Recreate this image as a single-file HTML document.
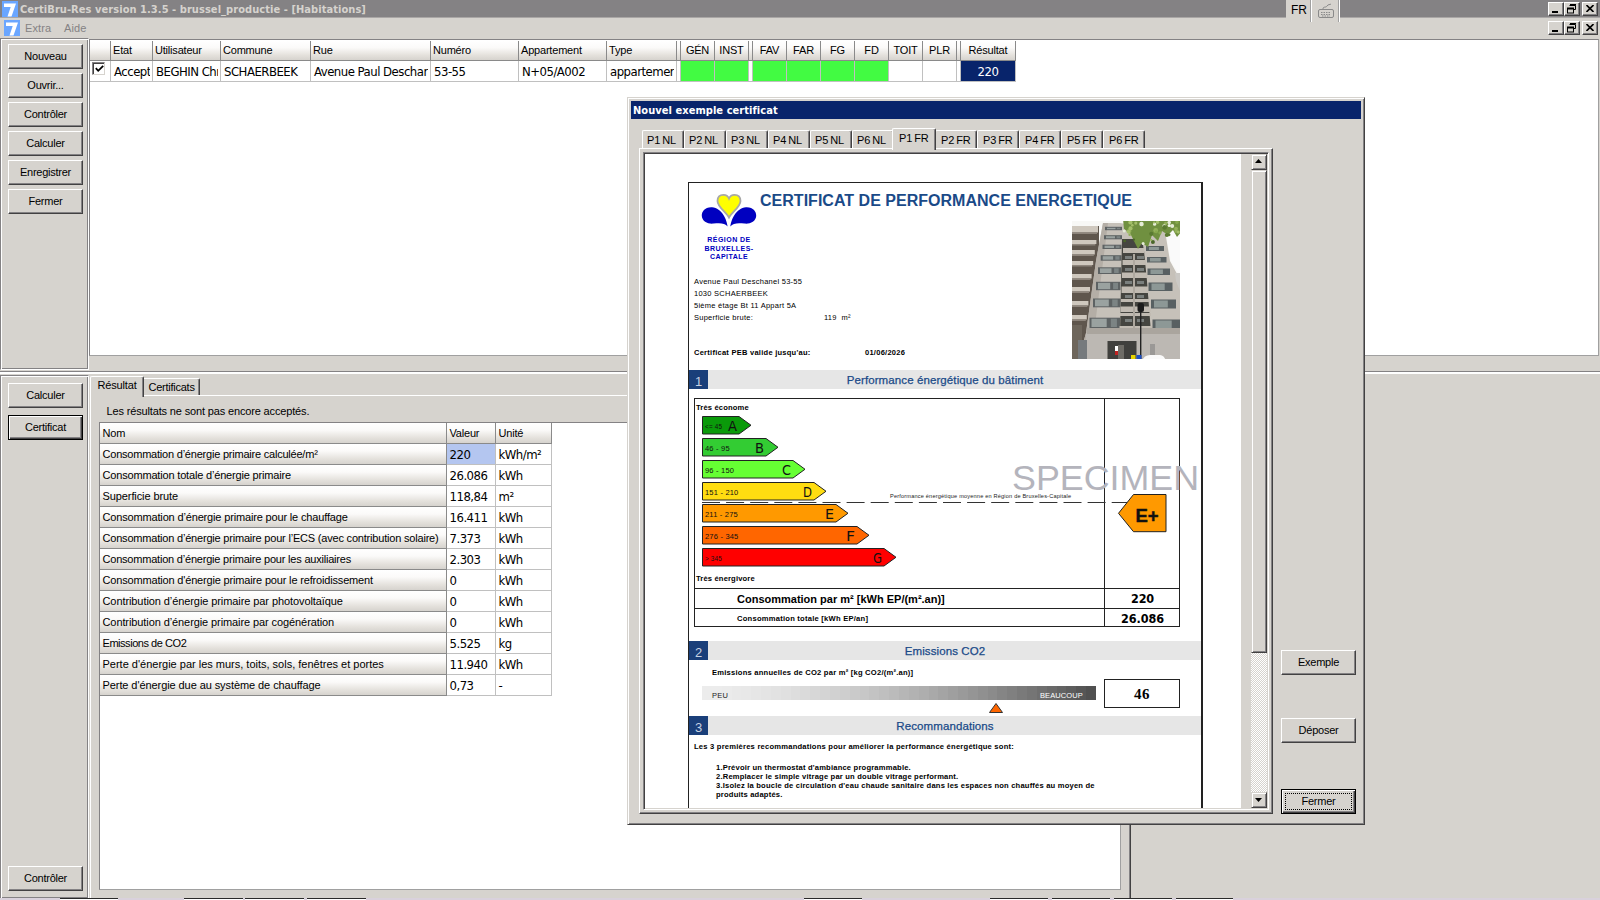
<!DOCTYPE html>
<html lang="fr">
<head>
<meta charset="utf-8">
<title>CertiBru-Res version 1.3.5 - brussel_productie - [Habitations]</title>
<style>
html,body{margin:0;padding:0}
body{width:1600px;height:900px;background:#d6d3ce;position:relative;overflow:hidden;
 font-family:"Liberation Sans",sans-serif;font-size:11px;color:#000;line-height:1}
*{box-sizing:border-box}
.a{position:absolute;white-space:nowrap}
.th{font-family:"Liberation Sans",sans-serif;font-size:11px;letter-spacing:-0.2px}
.tv{font-family:"DejaVu Sans Condensed","DejaVu Sans","Liberation Sans",sans-serif;font-size:13px;letter-spacing:-0.5px}
.btn{position:absolute;width:75px;height:25px;background:#d6d3ce;border:1px solid;border-color:#fff #424142 #424142 #fff;
 box-shadow:inset -1px -1px 0 #848284;text-align:center;line-height:22px;font-size:11px;white-space:nowrap;letter-spacing:-0.25px}
.btn.def{border:1px solid #000;box-shadow:inset 1px 1px 0 #fff,inset -1px -1px 0 #424142,inset -2px -2px 0 #848284}
.hd{position:absolute;top:41px;height:20px;background:linear-gradient(#fff 0%,#fbfaf9 35%,#e4e1dc 75%,#d6d3ce 100%);
 border-right:1px solid #8a8a8a;border-bottom:1px solid #8a8a8a;padding:4px 0 0 2px;white-space:nowrap;overflow:hidden}
.hd.c{padding-left:0;text-align:center}
.cl{position:absolute;top:61px;height:21px;background:#fff;border-right:1px solid #c0c0c0;border-bottom:1px solid #c0c0c0;
 padding:4px 0 0 3px;white-space:nowrap;overflow:hidden}
.cl::after{content:'';position:absolute;right:0;top:0;width:2px;height:20px;background:inherit}
.g{background:#42fb42}
.sunk{position:absolute;border:1px solid;border-color:#848284 #fff #fff #848284;box-shadow:inset 1px 1px 0 #fff,inset -1px -1px 0 #848284}
.rais{position:absolute;border:1px solid;border-color:#fff #848284 #848284 #fff}
.wb{position:absolute;width:16px;height:14px;background:#d6d3ce;border:1px solid;border-color:#fff #424142 #424142 #fff;box-shadow:inset -1px -1px 0 #848284}
</style>
</head>
<body>
<!-- ===== main title bar ===== -->
<div class="a" style="left:0;top:0;width:1600px;height:18px;background:#848284;border-bottom:1px solid #aaa7a6"></div>
<svg class="a" style="left:2px;top:1px" width="16" height="16" viewBox="0 0 16 16"><rect width="16" height="16" fill="#6aa6ff"/><path d="M2 2.5h12l-4.5 13H5.5l3.2-9.5H2z" fill="#fff"/></svg>
<div class="a" style="left:20px;top:3px;color:#d6d3ce;font-family:'DejaVu Sans Condensed','DejaVu Sans','Liberation Sans',sans-serif;font-weight:bold;font-size:11px;letter-spacing:0.06px;line-height:13px">CertiBru-Res version 1.3.5 - brussel_productie - [Habitations]</div>
<!-- language bar -->
<div class="a" style="left:1286px;top:0;width:54px;height:22px;background:#d6d3ce"></div>
<div class="a" style="left:1311px;top:0;width:1px;height:22px;background:#fff"></div>
<div class="a" style="left:1310px;top:0;width:1px;height:22px;background:#a0a0a0"></div>
<div class="a" style="left:1339px;top:0;width:1px;height:22px;background:#fff"></div>
<div class="a" style="left:1338px;top:0;width:1px;height:22px;background:#a0a0a0"></div>
<div class="a" style="left:1291px;top:4px;font-size:12px;line-height:13px;font-family:'Liberation Sans',sans-serif">FR</div>
<svg class="a" style="left:1317px;top:3px" width="18" height="16" viewBox="0 0 18 16" fill="none" stroke="#8a8a8a" stroke-width="1"><rect x="1.5" y="6.5" width="15" height="8" rx="1.5"/><path d="M4 9.5h10M4 11.5h10M5 13h8" stroke-dasharray="1.5 1"/><path d="M6 6c0-3 3-1 4-3s3-1 4-2"/></svg>
<!-- window buttons row 1 -->
<div class="wb" style="left:1548px;top:2px"></div><div class="a" style="left:1552px;top:11px;width:6px;height:2px;background:#000"></div>
<div class="wb" style="left:1564px;top:2px"></div>
<svg class="a" style="left:1567px;top:4px" width="10" height="10" viewBox="0 0 10 10" fill="none" stroke="#000"><path d="M3 1.0h6M2.5 1.5h6v4h-1.5M2.5 2.5"/><path d="M3 0.5h6" stroke-width="1"/><rect x="0.5" y="4.5" width="6" height="4.5" fill="#d6d3ce"/><path d="M0 4.5h7" stroke-width="2"/></svg>
<div class="wb" style="left:1582px;top:2px"></div>
<svg class="a" style="left:1586px;top:5px" width="8" height="7" viewBox="0 0 8 7" stroke="#000" stroke-width="1.6"><path d="M0.5 0l7 7M7.5 0l-7 7"/></svg>
<!-- ===== menu bar ===== -->
<svg class="a" style="left:4px;top:20px" width="16" height="16" viewBox="0 0 16 16"><rect width="16" height="16" fill="#6aa6ff"/><path d="M2 2.5h12l-4.5 13H5.5l3.2-9.5H2z" fill="#fff"/></svg>
<div class="a th" style="left:25px;top:23px;color:#848284;font-size:11px;letter-spacing:0.1px">Extra</div>
<div class="a th" style="left:64px;top:23px;color:#848284;font-size:11px;letter-spacing:0.1px">Aide</div>
<!-- window buttons row 2 -->
<div class="wb" style="left:1548px;top:21px"></div><div class="a" style="left:1552px;top:30px;width:6px;height:2px;background:#000"></div>
<div class="wb" style="left:1564px;top:21px"></div>
<svg class="a" style="left:1567px;top:23px" width="10" height="10" viewBox="0 0 10 10" fill="none" stroke="#000"><path d="M2.5 1.5h6v4h-1.5"/><path d="M3 0.5h6" stroke-width="1"/><rect x="0.5" y="4.5" width="6" height="4.5" fill="#d6d3ce"/><path d="M0 4.5h7" stroke-width="2"/></svg>
<div class="wb" style="left:1582px;top:21px"></div>
<svg class="a" style="left:1586px;top:24px" width="8" height="7" viewBox="0 0 8 7" stroke="#000" stroke-width="1.6"><path d="M0.5 0l7 7M7.5 0l-7 7"/></svg>
<!-- ===== left top panel ===== -->
<div class="sunk" style="left:0;top:38px;width:89px;height:332px"></div>
<div class="btn" style="left:8px;top:44px">Nouveau</div>
<div class="btn" style="left:8px;top:73px">Ouvrir...</div>
<div class="btn" style="left:8px;top:102px">Contrôler</div>
<div class="btn" style="left:8px;top:131px">Calculer</div>
<div class="btn" style="left:8px;top:160px">Enregistrer</div>
<div class="btn" style="left:8px;top:189px">Fermer</div>
<!-- ===== top grid ===== -->
<div class="a" style="left:89px;top:39px;width:1510px;height:317px;background:#fff;border:1px solid;border-color:#848284 #a0a0a0 #a0a0a0 #848284"></div>
<div class="hd" style="left:90px;width:21px"></div>
<div class="hd th" style="left:111px;width:42px">Etat</div>
<div class="hd th" style="left:153px;width:68px">Utilisateur</div>
<div class="hd th" style="left:221px;width:90px">Commune</div>
<div class="hd th" style="left:311px;width:120px">Rue</div>
<div class="hd th" style="left:431px;width:88px">Numéro</div>
<div class="hd th" style="left:519px;width:88px">Appartement</div>
<div class="hd th" style="left:607px;width:70px">Type</div>
<div class="hd" style="left:677px;width:4px"></div>
<div class="hd th c" style="left:681px;width:34px">GÉN</div>
<div class="hd th c" style="left:715px;width:34px">INST</div>
<div class="hd" style="left:749px;width:4px"></div>
<div class="hd th c" style="left:753px;width:34px">FAV</div>
<div class="hd th c" style="left:787px;width:34px">FAR</div>
<div class="hd th c" style="left:821px;width:34px">FG</div>
<div class="hd th c" style="left:855px;width:34px">FD</div>
<div class="hd th c" style="left:889px;width:34px">TOIT</div>
<div class="hd th c" style="left:923px;width:34px">PLR</div>
<div class="hd" style="left:957px;width:4px"></div>
<div class="hd th c" style="left:961px;width:55px">Résultat</div>
<!-- data row -->
<div class="cl" style="left:90px;width:21px;padding:0"></div>
<div class="a" style="left:92px;top:62px;width:13px;height:13px;background:#fff;border:1px solid;border-color:#848284 #d6d3ce #d6d3ce #848284;box-shadow:inset 1px 1px 0 #424142"></div>
<svg class="a" style="left:95px;top:65px" width="9" height="8" viewBox="0 0 9 8" fill="none" stroke="#000" stroke-width="1.8"><path d="M0.8 3.2l2.4 2.6l5-5"/></svg>
<div class="cl tv" style="left:111px;width:42px">Accepté</div>
<div class="cl tv" style="left:153px;width:68px">BEGHIN Christian</div>
<div class="cl tv" style="left:221px;width:90px">SCHAERBEEK</div>
<div class="cl tv" style="left:311px;width:120px">Avenue Paul Deschanel</div>
<div class="cl tv" style="left:431px;width:88px">53-55</div>
<div class="cl tv" style="left:519px;width:88px">N+05/A002</div>
<div class="cl tv" style="left:607px;width:70px">appartement</div>
<div class="cl" style="left:677px;width:4px;padding:0"></div>
<div class="cl g" style="left:681px;width:34px"></div>
<div class="cl g" style="left:715px;width:34px"></div>
<div class="cl" style="left:749px;width:4px;padding:0"></div>
<div class="cl g" style="left:753px;width:34px"></div>
<div class="cl g" style="left:787px;width:34px"></div>
<div class="cl g" style="left:821px;width:34px"></div>
<div class="cl g" style="left:855px;width:34px"></div>
<div class="cl" style="left:889px;width:34px"></div>
<div class="cl" style="left:923px;width:34px"></div>
<div class="cl" style="left:957px;width:4px;padding:0"></div>
<div class="cl tv" style="left:961px;width:55px;background:#08246b;color:#fff;text-align:center;padding-left:0">220</div>
<!-- ===== horizontal splitter ===== -->
<div class="a" style="left:0;top:371px;width:1600px;height:1px;background:#848284"></div>
<div class="a" style="left:0;top:372px;width:1600px;height:2px;background:#fff"></div>
<!-- ===== left bottom panel ===== -->
<div class="sunk" style="left:0;top:375px;width:89px;height:523px;border-bottom:0"></div>
<div class="btn" style="left:8px;top:383px">Calculer</div>
<div class="btn def" style="left:8px;top:415px">Certificat</div>
<div class="btn" style="left:8px;top:866px">Contrôler</div>
<!-- ===== bottom tab control ===== -->
<div class="a" style="left:90px;top:395px;width:1041px;height:510px;border:1px solid;border-color:#fff #424142 #424142 #fff;box-shadow:inset -1px -1px 0 #848284"></div>
<div class="a" style="left:90px;top:376px;width:54px;height:21px;background:#d6d3ce;border:1px solid;border-color:#fff #424142 #d6d3ce #fff;border-bottom:0;box-shadow:inset -1px 0 0 #848284;border-radius:2px 2px 0 0"></div>
<div class="a" style="left:97.5px;top:379.5px;font-size:11px;letter-spacing:-0.15px">Résultat</div>
<div class="a" style="left:144px;top:378px;width:56px;height:17px;background:#d6d3ce;border:1px solid;border-color:#fff #424142 #d6d3ce #fff;border-bottom:0;border-left:0;box-shadow:inset -1px 0 0 #848284;border-radius:0 2px 0 0"></div>
<div class="a" style="left:148.5px;top:382px;font-size:11px;letter-spacing:-0.25px">Certificats</div>
<div class="a" style="left:106.5px;top:406px;font-size:11px;letter-spacing:-0.15px">Les résultats ne sont pas encore acceptés.</div>
<div class="a" style="left:99px;top:422px;width:1022px;height:468px;background:#fff;border:1px solid;border-color:#848284 #a0a0a0 #a0a0a0 #848284"></div>
<div class="th" style="position:absolute;height:21px;background:linear-gradient(#fff 0%,#fbfaf9 35%,#e4e1dc 75%,#d6d3ce 100%);border-right:1px solid #8a8a8a;border-bottom:1px solid #8a8a8a;padding:5px 0 0 2.5px;white-space:nowrap;overflow:hidden;left:100px;top:423px;width:347px">Nom</div>
<div class="th" style="position:absolute;height:21px;background:linear-gradient(#fff 0%,#fbfaf9 35%,#e4e1dc 75%,#d6d3ce 100%);border-right:1px solid #8a8a8a;border-bottom:1px solid #8a8a8a;padding:5px 0 0 2.5px;white-space:nowrap;overflow:hidden;left:447px;top:423px;width:49px">Valeur</div>
<div class="th" style="position:absolute;height:21px;background:linear-gradient(#fff 0%,#fbfaf9 35%,#e4e1dc 75%,#d6d3ce 100%);border-right:1px solid #8a8a8a;border-bottom:1px solid #8a8a8a;padding:5px 0 0 2.5px;white-space:nowrap;overflow:hidden;left:496px;top:423px;width:56px">Unité</div>
<div class="th" style="position:absolute;height:21px;background:linear-gradient(#fff 0%,#fbfaf9 35%,#e4e1dc 75%,#d6d3ce 100%);border-right:1px solid #8a8a8a;border-bottom:1px solid #8a8a8a;padding:5px 0 0 2.5px;white-space:nowrap;overflow:hidden;left:100px;top:444px;width:347px;letter-spacing:-0.216px">Consommation d’énergie primaire calculée/m²</div>
<div class="tv" style="position:absolute;height:21px;background:#fff;border-right:1px solid #c0c0c0;border-bottom:1px solid #c0c0c0;padding:4px 0 0 2.5px;white-space:nowrap;overflow:hidden;left:447px;top:444px;width:49px;background:#b4c6f0">220</div>
<div class="tv" style="position:absolute;height:21px;background:#fff;border-right:1px solid #c0c0c0;border-bottom:1px solid #c0c0c0;padding:4px 0 0 2.5px;white-space:nowrap;overflow:hidden;left:496px;top:444px;width:56px">kWh/m²</div>
<div class="th" style="position:absolute;height:21px;background:linear-gradient(#fff 0%,#fbfaf9 35%,#e4e1dc 75%,#d6d3ce 100%);border-right:1px solid #8a8a8a;border-bottom:1px solid #8a8a8a;padding:5px 0 0 2.5px;white-space:nowrap;overflow:hidden;left:100px;top:465px;width:347px;letter-spacing:-0.174px">Consommation totale d’énergie primaire</div>
<div class="tv" style="position:absolute;height:21px;background:#fff;border-right:1px solid #c0c0c0;border-bottom:1px solid #c0c0c0;padding:4px 0 0 2.5px;white-space:nowrap;overflow:hidden;left:447px;top:465px;width:49px">26.086</div>
<div class="tv" style="position:absolute;height:21px;background:#fff;border-right:1px solid #c0c0c0;border-bottom:1px solid #c0c0c0;padding:4px 0 0 2.5px;white-space:nowrap;overflow:hidden;left:496px;top:465px;width:56px">kWh</div>
<div class="th" style="position:absolute;height:21px;background:linear-gradient(#fff 0%,#fbfaf9 35%,#e4e1dc 75%,#d6d3ce 100%);border-right:1px solid #8a8a8a;border-bottom:1px solid #8a8a8a;padding:5px 0 0 2.5px;white-space:nowrap;overflow:hidden;left:100px;top:486px;width:347px;letter-spacing:-0.094px">Superficie brute</div>
<div class="tv" style="position:absolute;height:21px;background:#fff;border-right:1px solid #c0c0c0;border-bottom:1px solid #c0c0c0;padding:4px 0 0 2.5px;white-space:nowrap;overflow:hidden;left:447px;top:486px;width:49px">118,84</div>
<div class="tv" style="position:absolute;height:21px;background:#fff;border-right:1px solid #c0c0c0;border-bottom:1px solid #c0c0c0;padding:4px 0 0 2.5px;white-space:nowrap;overflow:hidden;left:496px;top:486px;width:56px">m²</div>
<div class="th" style="position:absolute;height:21px;background:linear-gradient(#fff 0%,#fbfaf9 35%,#e4e1dc 75%,#d6d3ce 100%);border-right:1px solid #8a8a8a;border-bottom:1px solid #8a8a8a;padding:5px 0 0 2.5px;white-space:nowrap;overflow:hidden;left:100px;top:507px;width:347px;letter-spacing:-0.159px">Consommation d’énergie primaire pour le chauffage</div>
<div class="tv" style="position:absolute;height:21px;background:#fff;border-right:1px solid #c0c0c0;border-bottom:1px solid #c0c0c0;padding:4px 0 0 2.5px;white-space:nowrap;overflow:hidden;left:447px;top:507px;width:49px">16.411</div>
<div class="tv" style="position:absolute;height:21px;background:#fff;border-right:1px solid #c0c0c0;border-bottom:1px solid #c0c0c0;padding:4px 0 0 2.5px;white-space:nowrap;overflow:hidden;left:496px;top:507px;width:56px">kWh</div>
<div class="th" style="position:absolute;height:21px;background:linear-gradient(#fff 0%,#fbfaf9 35%,#e4e1dc 75%,#d6d3ce 100%);border-right:1px solid #8a8a8a;border-bottom:1px solid #8a8a8a;padding:5px 0 0 2.5px;white-space:nowrap;overflow:hidden;left:100px;top:528px;width:347px;letter-spacing:-0.196px">Consommation d’énergie primaire pour l’ECS (avec contribution solaire)</div>
<div class="tv" style="position:absolute;height:21px;background:#fff;border-right:1px solid #c0c0c0;border-bottom:1px solid #c0c0c0;padding:4px 0 0 2.5px;white-space:nowrap;overflow:hidden;left:447px;top:528px;width:49px">7.373</div>
<div class="tv" style="position:absolute;height:21px;background:#fff;border-right:1px solid #c0c0c0;border-bottom:1px solid #c0c0c0;padding:4px 0 0 2.5px;white-space:nowrap;overflow:hidden;left:496px;top:528px;width:56px">kWh</div>
<div class="th" style="position:absolute;height:21px;background:linear-gradient(#fff 0%,#fbfaf9 35%,#e4e1dc 75%,#d6d3ce 100%);border-right:1px solid #8a8a8a;border-bottom:1px solid #8a8a8a;padding:5px 0 0 2.5px;white-space:nowrap;overflow:hidden;left:100px;top:549px;width:347px;letter-spacing:-0.206px">Consommation d’énergie primaire pour les auxiliaires</div>
<div class="tv" style="position:absolute;height:21px;background:#fff;border-right:1px solid #c0c0c0;border-bottom:1px solid #c0c0c0;padding:4px 0 0 2.5px;white-space:nowrap;overflow:hidden;left:447px;top:549px;width:49px">2.303</div>
<div class="tv" style="position:absolute;height:21px;background:#fff;border-right:1px solid #c0c0c0;border-bottom:1px solid #c0c0c0;padding:4px 0 0 2.5px;white-space:nowrap;overflow:hidden;left:496px;top:549px;width:56px">kWh</div>
<div class="th" style="position:absolute;height:21px;background:linear-gradient(#fff 0%,#fbfaf9 35%,#e4e1dc 75%,#d6d3ce 100%);border-right:1px solid #8a8a8a;border-bottom:1px solid #8a8a8a;padding:5px 0 0 2.5px;white-space:nowrap;overflow:hidden;left:100px;top:570px;width:347px;letter-spacing:-0.169px">Consommation d'énergie primaire pour le refroidissement</div>
<div class="tv" style="position:absolute;height:21px;background:#fff;border-right:1px solid #c0c0c0;border-bottom:1px solid #c0c0c0;padding:4px 0 0 2.5px;white-space:nowrap;overflow:hidden;left:447px;top:570px;width:49px">0</div>
<div class="tv" style="position:absolute;height:21px;background:#fff;border-right:1px solid #c0c0c0;border-bottom:1px solid #c0c0c0;padding:4px 0 0 2.5px;white-space:nowrap;overflow:hidden;left:496px;top:570px;width:56px">kWh</div>
<div class="th" style="position:absolute;height:21px;background:linear-gradient(#fff 0%,#fbfaf9 35%,#e4e1dc 75%,#d6d3ce 100%);border-right:1px solid #8a8a8a;border-bottom:1px solid #8a8a8a;padding:5px 0 0 2.5px;white-space:nowrap;overflow:hidden;left:100px;top:591px;width:347px;letter-spacing:-0.084px">Contribution d’énergie primaire par photovoltaïque</div>
<div class="tv" style="position:absolute;height:21px;background:#fff;border-right:1px solid #c0c0c0;border-bottom:1px solid #c0c0c0;padding:4px 0 0 2.5px;white-space:nowrap;overflow:hidden;left:447px;top:591px;width:49px">0</div>
<div class="tv" style="position:absolute;height:21px;background:#fff;border-right:1px solid #c0c0c0;border-bottom:1px solid #c0c0c0;padding:4px 0 0 2.5px;white-space:nowrap;overflow:hidden;left:496px;top:591px;width:56px">kWh</div>
<div class="th" style="position:absolute;height:21px;background:linear-gradient(#fff 0%,#fbfaf9 35%,#e4e1dc 75%,#d6d3ce 100%);border-right:1px solid #8a8a8a;border-bottom:1px solid #8a8a8a;padding:5px 0 0 2.5px;white-space:nowrap;overflow:hidden;left:100px;top:612px;width:347px;letter-spacing:-0.092px">Contribution d’énergie primaire par cogénération</div>
<div class="tv" style="position:absolute;height:21px;background:#fff;border-right:1px solid #c0c0c0;border-bottom:1px solid #c0c0c0;padding:4px 0 0 2.5px;white-space:nowrap;overflow:hidden;left:447px;top:612px;width:49px">0</div>
<div class="tv" style="position:absolute;height:21px;background:#fff;border-right:1px solid #c0c0c0;border-bottom:1px solid #c0c0c0;padding:4px 0 0 2.5px;white-space:nowrap;overflow:hidden;left:496px;top:612px;width:56px">kWh</div>
<div class="th" style="position:absolute;height:21px;background:linear-gradient(#fff 0%,#fbfaf9 35%,#e4e1dc 75%,#d6d3ce 100%);border-right:1px solid #8a8a8a;border-bottom:1px solid #8a8a8a;padding:5px 0 0 2.5px;white-space:nowrap;overflow:hidden;left:100px;top:633px;width:347px;letter-spacing:-0.456px">Emissions de CO2</div>
<div class="tv" style="position:absolute;height:21px;background:#fff;border-right:1px solid #c0c0c0;border-bottom:1px solid #c0c0c0;padding:4px 0 0 2.5px;white-space:nowrap;overflow:hidden;left:447px;top:633px;width:49px">5.525</div>
<div class="tv" style="position:absolute;height:21px;background:#fff;border-right:1px solid #c0c0c0;border-bottom:1px solid #c0c0c0;padding:4px 0 0 2.5px;white-space:nowrap;overflow:hidden;left:496px;top:633px;width:56px">kg</div>
<div class="th" style="position:absolute;height:21px;background:linear-gradient(#fff 0%,#fbfaf9 35%,#e4e1dc 75%,#d6d3ce 100%);border-right:1px solid #8a8a8a;border-bottom:1px solid #8a8a8a;padding:5px 0 0 2.5px;white-space:nowrap;overflow:hidden;left:100px;top:654px;width:347px;letter-spacing:-0.003px">Perte d'énergie par les murs, toits, sols, fenêtres et portes</div>
<div class="tv" style="position:absolute;height:21px;background:#fff;border-right:1px solid #c0c0c0;border-bottom:1px solid #c0c0c0;padding:4px 0 0 2.5px;white-space:nowrap;overflow:hidden;left:447px;top:654px;width:49px">11.940</div>
<div class="tv" style="position:absolute;height:21px;background:#fff;border-right:1px solid #c0c0c0;border-bottom:1px solid #c0c0c0;padding:4px 0 0 2.5px;white-space:nowrap;overflow:hidden;left:496px;top:654px;width:56px">kWh</div>
<div class="th" style="position:absolute;height:21px;background:linear-gradient(#fff 0%,#fbfaf9 35%,#e4e1dc 75%,#d6d3ce 100%);border-right:1px solid #8a8a8a;border-bottom:1px solid #8a8a8a;padding:5px 0 0 2.5px;white-space:nowrap;overflow:hidden;left:100px;top:675px;width:347px;letter-spacing:-0.079px">Perte d'énergie due au système de chauffage</div>
<div class="tv" style="position:absolute;height:21px;background:#fff;border-right:1px solid #c0c0c0;border-bottom:1px solid #c0c0c0;padding:4px 0 0 2.5px;white-space:nowrap;overflow:hidden;left:447px;top:675px;width:49px">0,73</div>
<div class="tv" style="position:absolute;height:21px;background:#fff;border-right:1px solid #c0c0c0;border-bottom:1px solid #c0c0c0;padding:4px 0 0 2.5px;white-space:nowrap;overflow:hidden;left:496px;top:675px;width:56px">-</div>
<div class="a" style="left:0;top:898px;width:1600px;height:2px;background:#d9d1dc"></div>
<div class="a" style="left:60px;top:898px;width:58px;height:2px;background:#fff;border-top:1px solid #2a2a2a"></div>
<div class="a" style="left:184px;top:898px;width:59px;height:2px;background:#fff;border-top:1px solid #2a2a2a"></div>
<div class="a" style="left:245px;top:898px;width:59px;height:2px;background:#fff;border-top:1px solid #2a2a2a"></div>
<div class="a" style="left:307px;top:898px;width:59px;height:2px;background:#fff;border-top:1px solid #2a2a2a"></div>
<div class="a" style="left:804px;top:898px;width:58px;height:2px;background:#fff;border-top:1px solid #2a2a2a"></div>
<div class="a" style="left:990px;top:898px;width:58px;height:2px;background:#fff;border-top:1px solid #2a2a2a"></div>
<div class="a" style="left:1052px;top:898px;width:58px;height:2px;background:#fff;border-top:1px solid #2a2a2a"></div>
<div class="a" style="left:1114px;top:898px;width:58px;height:2px;background:#fff;border-top:1px solid #2a2a2a"></div>
<div class="a" style="left:1176px;top:898px;width:57px;height:2px;background:#fff;border-top:1px solid #2a2a2a"></div>
<!-- ===== dialog ===== -->
<div class="a" style="left:627px;top:97px;width:738px;height:728px;background:#d6d3ce;border:1px solid;border-color:#d6d3ce #424142 #424142 #d6d3ce;box-shadow:inset 1px 1px 0 #fff,inset -1px -1px 0 #848284"></div>
<div class="a" style="left:631px;top:101px;width:730px;height:18px;background:#08246b"></div>
<div class="a" style="left:633px;top:104px;color:#fff;font-family:'DejaVu Sans Condensed','DejaVu Sans','Liberation Sans',sans-serif;font-weight:bold;font-size:11px;line-height:13px;letter-spacing:0.05px">Nouvel exemple certificat</div>
<div class="a" style="left:639px;top:148px;width:634px;height:666px;border:1px solid;border-color:#fff #424142 #424142 #fff;box-shadow:inset -1px -1px 0 #848284"></div>
<div class="a" style="left:643px;top:152px;width:626px;height:658px;background:#d6d3ce;border:1px solid;border-color:#848284 #fff #fff #848284;box-shadow:inset 1px 1px 0 #424142"></div>
<div class="a" style="left:645px;top:154px;width:596px;height:654px;background:#fff;overflow:hidden" id="page"></div>
<div class="a" style="left:642px;top:130px;width:42px;height:18px;background:#d6d3ce;border:1px solid;border-color:#fff #424142 #d6d3ce #fff;border-bottom:0;box-shadow:inset -1px 0 0 #848284;border-radius:2px 2px 0 0"></div>
<div class="a" style="left:647px;top:135px;font-size:11px;word-spacing:-1px;letter-spacing:-0.1px">P1 NL</div>
<div class="a" style="left:684px;top:130px;width:42px;height:18px;background:#d6d3ce;border:1px solid;border-color:#fff #424142 #d6d3ce #fff;border-bottom:0;box-shadow:inset -1px 0 0 #848284;border-radius:2px 2px 0 0"></div>
<div class="a" style="left:689px;top:135px;font-size:11px;word-spacing:-1px;letter-spacing:-0.1px">P2 NL</div>
<div class="a" style="left:726px;top:130px;width:42px;height:18px;background:#d6d3ce;border:1px solid;border-color:#fff #424142 #d6d3ce #fff;border-bottom:0;box-shadow:inset -1px 0 0 #848284;border-radius:2px 2px 0 0"></div>
<div class="a" style="left:731px;top:135px;font-size:11px;word-spacing:-1px;letter-spacing:-0.1px">P3 NL</div>
<div class="a" style="left:768px;top:130px;width:42px;height:18px;background:#d6d3ce;border:1px solid;border-color:#fff #424142 #d6d3ce #fff;border-bottom:0;box-shadow:inset -1px 0 0 #848284;border-radius:2px 2px 0 0"></div>
<div class="a" style="left:773px;top:135px;font-size:11px;word-spacing:-1px;letter-spacing:-0.1px">P4 NL</div>
<div class="a" style="left:810px;top:130px;width:42px;height:18px;background:#d6d3ce;border:1px solid;border-color:#fff #424142 #d6d3ce #fff;border-bottom:0;box-shadow:inset -1px 0 0 #848284;border-radius:2px 2px 0 0"></div>
<div class="a" style="left:815px;top:135px;font-size:11px;word-spacing:-1px;letter-spacing:-0.1px">P5 NL</div>
<div class="a" style="left:852px;top:130px;width:42px;height:18px;background:#d6d3ce;border:1px solid;border-color:#fff #424142 #d6d3ce #fff;border-bottom:0;box-shadow:inset -1px 0 0 #848284;border-radius:2px 2px 0 0"></div>
<div class="a" style="left:857px;top:135px;font-size:11px;word-spacing:-1px;letter-spacing:-0.1px">P6 NL</div>
<div class="a" style="left:935px;top:130px;width:42px;height:18px;background:#d6d3ce;border:1px solid;border-color:#fff #424142 #d6d3ce #fff;border-bottom:0;box-shadow:inset -1px 0 0 #848284;border-radius:2px 2px 0 0"></div>
<div class="a" style="left:941px;top:135px;font-size:11px;word-spacing:-1px;letter-spacing:-0.1px">P2 FR</div>
<div class="a" style="left:977px;top:130px;width:42px;height:18px;background:#d6d3ce;border:1px solid;border-color:#fff #424142 #d6d3ce #fff;border-bottom:0;box-shadow:inset -1px 0 0 #848284;border-radius:2px 2px 0 0"></div>
<div class="a" style="left:983px;top:135px;font-size:11px;word-spacing:-1px;letter-spacing:-0.1px">P3 FR</div>
<div class="a" style="left:1019px;top:130px;width:42px;height:18px;background:#d6d3ce;border:1px solid;border-color:#fff #424142 #d6d3ce #fff;border-bottom:0;box-shadow:inset -1px 0 0 #848284;border-radius:2px 2px 0 0"></div>
<div class="a" style="left:1025px;top:135px;font-size:11px;word-spacing:-1px;letter-spacing:-0.1px">P4 FR</div>
<div class="a" style="left:1061px;top:130px;width:42px;height:18px;background:#d6d3ce;border:1px solid;border-color:#fff #424142 #d6d3ce #fff;border-bottom:0;box-shadow:inset -1px 0 0 #848284;border-radius:2px 2px 0 0"></div>
<div class="a" style="left:1067px;top:135px;font-size:11px;word-spacing:-1px;letter-spacing:-0.1px">P5 FR</div>
<div class="a" style="left:1103px;top:130px;width:42px;height:18px;background:#d6d3ce;border:1px solid;border-color:#fff #424142 #d6d3ce #fff;border-bottom:0;box-shadow:inset -1px 0 0 #848284;border-radius:2px 2px 0 0"></div>
<div class="a" style="left:1109px;top:135px;font-size:11px;word-spacing:-1px;letter-spacing:-0.1px">P6 FR</div>
<div class="a" style="left:892px;top:128px;width:44px;height:22px;background:#d6d3ce;border:1px solid;border-color:#fff #424142 #d6d3ce #fff;border-bottom:0;box-shadow:inset -1px 0 0 #848284;border-radius:2px 2px 0 0"></div>
<div class="a" style="left:899px;top:133px;font-size:11px;word-spacing:-1px;letter-spacing:-0.1px">P1 FR</div>
<div class="a" style="left:1251px;top:154px;width:16px;height:654px;background:repeating-conic-gradient(#fff 0% 25%,#d6d3ce 0% 50%) 0 0/2px 2px"></div>
<div style="position:absolute;left:1251px;width:16px;background:#d6d3ce;border:1px solid;border-color:#d6d3ce #424142 #424142 #d6d3ce;box-shadow:inset 1px 1px 0 #fff,inset -1px -1px 0 #848284;top:154px;height:16px"></div>
<div style="position:absolute;left:1251px;width:16px;background:#d6d3ce;border:1px solid;border-color:#d6d3ce #424142 #424142 #d6d3ce;box-shadow:inset 1px 1px 0 #fff,inset -1px -1px 0 #848284;top:170px;height:483px"></div>
<div style="position:absolute;left:1251px;width:16px;background:#d6d3ce;border:1px solid;border-color:#d6d3ce #424142 #424142 #d6d3ce;box-shadow:inset 1px 1px 0 #fff,inset -1px -1px 0 #848284;top:792px;height:16px"></div>
<svg class="a" style="left:1255px;top:159px" width="7" height="4" viewBox="0 0 7 4"><path d="M0 4L3.5 0L7 4z" fill="#000"/></svg>
<svg class="a" style="left:1255px;top:798px" width="7" height="4" viewBox="0 0 7 4"><path d="M0 0L3.5 4L7 0z" fill="#000"/></svg>
<div class="btn" style="left:1281px;top:650px">Exemple</div>
<div class="btn" style="left:1281px;top:718px">Déposer</div>
<div class="btn def" style="left:1281px;top:789px">Fermer</div>
<div class="a" style="left:1285px;top:793px;width:67px;height:17px;border:1px dotted #000"></div>
<!-- ===== certificate page ===== -->
<div class="a" style="left:645px;top:154px;width:596px;height:654px;overflow:hidden"><div style="position:absolute;left:-645px;top:-154px;width:1600px;height:900px;font-family:'Liberation Sans',sans-serif">
<div class="a" style="left:688px;top:182px;width:515px;height:700px;border:1px solid #222;border-right:2px solid #222"></div>
<svg class="a" style="left:698px;top:190px" width="62" height="40" viewBox="698 190 62 40">
<path d="M729 217.5 C726 212 717.5 207 717.5 201 C717.5 196.5 720.5 194.8 723.5 194.8 C726 194.8 728 196 729 198.5 C730 196 732 194.8 734.5 194.8 C737.5 194.8 740.5 196.5 740.5 201 C740.5 207 732 212 729 217.5z" fill="#ffff00" stroke="#a8a8a8" stroke-width="1.8"/>
<path d="M727.6 226.5 C727 220 722 208 712 207.2 C705 206.8 701.5 211.5 701.8 216 C702.2 221.5 708 224.2 713.5 223.6 C720 222.8 725 223 727.6 226.5z" fill="#0000c0"/>
<path d="M730.4 226.5 C731 220 736 208 746 207.2 C753 206.8 756.5 211.5 756.2 216 C755.8 221.5 750 224.2 744.5 223.6 C738 222.8 733 223 730.4 226.5z" fill="#0000c0"/>
</svg>
<div class="a" style="color:#0000c0;font-weight:bold;font-size:7px;letter-spacing:0.45px;width:80px;text-align:center;left:689px;top:236px">RÉGION DE</div>
<div class="a" style="color:#0000c0;font-weight:bold;font-size:7px;letter-spacing:0.45px;width:80px;text-align:center;left:689px;top:245px">BRUXELLES-</div>
<div class="a" style="color:#0000c0;font-weight:bold;font-size:7px;letter-spacing:0.45px;width:80px;text-align:center;left:689px;top:253px">CAPITALE</div>
<div class="a" style="left:760px;top:192px;font-size:16px;font-weight:bold;color:#1a4a88;line-height:18px;letter-spacing:0.02px">CERTIFICAT DE PERFORMANCE ENERGETIQUE</div>
<div class="a" style="font-size:7.5px;line-height:9px;left:694px;letter-spacing:0.26px;top:276.5px">Avenue Paul Deschanel 53-55</div>
<div class="a" style="font-size:7.5px;line-height:9px;left:694px;letter-spacing:0.26px;top:288.5px">1030 SCHAERBEEK</div>
<div class="a" style="font-size:7.5px;line-height:9px;left:694px;letter-spacing:0.26px;top:300.5px">5ième étage Bt 11 Appart 5A</div>
<div class="a" style="font-size:7.5px;line-height:9px;left:694px;letter-spacing:0.26px;top:312.5px">Superficie brute:</div>
<div class="a" style="font-size:7.5px;line-height:9px;left:694px;letter-spacing:0.26px;top:312.5px;left:824px">119&nbsp; m²</div>
<div class="a" style="font-size:7.5px;line-height:9px;left:694px;letter-spacing:0.26px;top:347.5px;font-weight:bold">Certificat PEB valide jusqu'au:</div>
<div class="a" style="font-size:7.5px;line-height:9px;left:694px;letter-spacing:0.26px;top:347.5px;left:865px;font-weight:bold">01/06/2026</div>
<div class="a" style="left:689px;top:370px;width:512px;height:19px;background:#e6e6e6"></div>
<div class="a" style="left:689px;top:370px;width:19px;height:19px;background:#1a3f7a;color:#c8d2e2;font-size:13px;line-height:23px;padding-left:6px">1</div>
<div class="a" style="left:689px;top:370px;width:512px;height:19px;text-align:center;color:#1a4a88;font-size:11.5px;line-height:21px;letter-spacing:0.1px;-webkit-text-stroke:0.25px #1a4a88">Performance énergétique du bâtiment</div>
<div class="a" style="left:689px;top:641px;width:512px;height:19px;background:#e6e6e6"></div>
<div class="a" style="left:689px;top:641px;width:19px;height:19px;background:#1a3f7a;color:#c8d2e2;font-size:13px;line-height:23px;padding-left:6px">2</div>
<div class="a" style="left:689px;top:641px;width:512px;height:19px;text-align:center;color:#1a4a88;font-size:11.5px;line-height:21px;letter-spacing:0.1px;-webkit-text-stroke:0.25px #1a4a88">Emissions CO2</div>
<div class="a" style="left:689px;top:716px;width:512px;height:19px;background:#e6e6e6"></div>
<div class="a" style="left:689px;top:716px;width:19px;height:19px;background:#1a3f7a;color:#c8d2e2;font-size:13px;line-height:23px;padding-left:6px">3</div>
<div class="a" style="left:689px;top:716px;width:512px;height:19px;text-align:center;color:#1a4a88;font-size:11.5px;line-height:21px;letter-spacing:0.1px;-webkit-text-stroke:0.25px #1a4a88">Recommandations</div>
<div class="a" style="left:694px;top:398px;width:486px;height:229px;border:1px solid #222"></div>
<div class="a" style="left:1104px;top:398px;width:1px;height:229px;background:#222"></div>
<div class="a" style="left:694px;top:588px;width:486px;height:1px;background:#222"></div>
<div class="a" style="left:694px;top:608px;width:486px;height:1px;background:#222"></div>
<div class="a" style="left:696px;top:402.5px;font-size:7.6px;font-weight:bold;line-height:9px;letter-spacing:0.15px">Très économe</div>
<div class="a" style="left:696px;top:573.5px;font-size:7.6px;font-weight:bold;line-height:9px;letter-spacing:0.15px">Très énergivore</div>
<svg class="a" style="left:694px;top:398px" width="510" height="230" viewBox="694 398 510 230" font-family="Liberation Sans, sans-serif"><path d="M702.5 416.5H739L751 425.25L739 434.0H702.5z" fill="#0a9a0a" stroke="#222" stroke-width="1"/><text x="705" y="428.5" font-size="6.3" fill="#111" letter-spacing="0.2">&lt;= 45</text><text x="737" y="431.0" font-size="14" text-anchor="end" fill="#111" font-family="DejaVu Sans Condensed, DejaVu Sans, Liberation Sans, sans-serif" textLength="9" lengthAdjust="spacingAndGlyphs">A</text><path d="M702.5 438.5H766L778 447.25L766 456.0H702.5z" fill="#33cc33" stroke="#222" stroke-width="1"/><text x="705" y="450.5" font-size="7.5" fill="#111" letter-spacing="0.2">46 - 95</text><text x="764" y="453.0" font-size="14" text-anchor="end" fill="#111" font-family="DejaVu Sans Condensed, DejaVu Sans, Liberation Sans, sans-serif" textLength="9" lengthAdjust="spacingAndGlyphs">B</text><path d="M702.5 460.5H793L805 469.25L793 478.0H702.5z" fill="#66ff33" stroke="#222" stroke-width="1"/><text x="705" y="472.5" font-size="7.5" fill="#111" letter-spacing="0.2">96 - 150</text><text x="791" y="475.0" font-size="14" text-anchor="end" fill="#111" font-family="DejaVu Sans Condensed, DejaVu Sans, Liberation Sans, sans-serif" textLength="9" lengthAdjust="spacingAndGlyphs">C</text><path d="M702.5 482.5H814L826 491.25L814 500.0H702.5z" fill="#ffdd11" stroke="#222" stroke-width="1"/><text x="705" y="494.5" font-size="7.5" fill="#111" letter-spacing="0.2">151 - 210</text><text x="812" y="497.0" font-size="14" text-anchor="end" fill="#111" font-family="DejaVu Sans Condensed, DejaVu Sans, Liberation Sans, sans-serif" textLength="9" lengthAdjust="spacingAndGlyphs">D</text><path d="M702.5 504.5H836L848 513.25L836 522.0H702.5z" fill="#ff9900" stroke="#222" stroke-width="1"/><text x="705" y="516.5" font-size="7.5" fill="#111" letter-spacing="0.2">211 - 275</text><text x="834" y="519.0" font-size="14" text-anchor="end" fill="#111" font-family="DejaVu Sans Condensed, DejaVu Sans, Liberation Sans, sans-serif" textLength="9" lengthAdjust="spacingAndGlyphs">E</text><path d="M702.5 526.5H857L869 535.25L857 544.0H702.5z" fill="#ff6600" stroke="#222" stroke-width="1"/><text x="705" y="538.5" font-size="7.5" fill="#111" letter-spacing="0.2">276 - 345</text><text x="855" y="541.0" font-size="14" text-anchor="end" fill="#111" font-family="DejaVu Sans Condensed, DejaVu Sans, Liberation Sans, sans-serif" textLength="9" lengthAdjust="spacingAndGlyphs">F</text><path d="M702.5 548.5H884L896 557.25L884 566.0H702.5z" fill="#ff0000" stroke="#222" stroke-width="1"/><text x="705" y="560.5" font-size="6.3" fill="#111" letter-spacing="0.2">&gt; 345</text><text x="882" y="563.0" font-size="14" text-anchor="end" fill="#111" font-family="DejaVu Sans Condensed, DejaVu Sans, Liberation Sans, sans-serif" textLength="9" lengthAdjust="spacingAndGlyphs">G</text><path d="M702 502.5H1127" stroke="#333" stroke-width="1" stroke-dasharray="18 6.1"/><text x="890" y="498" font-size="5.6" fill="#222" textLength="181">Performance énergétique moyenne en Région de Bruxelles-Capitale</text><text x="1012" y="490" font-size="34.5" fill="#b4b4bc" textLength="187" lengthAdjust="spacingAndGlyphs">SPECIMEN</text><path d="M1118.5 513.3L1133.5 494.5H1166V531.7H1133.5z" fill="#ff9900" stroke="#222" stroke-width="1"/><text x="1135.5" y="521.5" font-size="18.5" font-weight="bold" fill="#111" stroke="#111" stroke-width="0.45">E+</text></svg>
<div class="a" style="left:737px;top:592.5px;font-size:11px;font-weight:bold;line-height:13px;letter-spacing:0.0px">Consommation par m² [kWh EP/(m².an)]</div>
<div class="a" style="left:737px;top:613.5px;font-size:7.6px;font-weight:bold;line-height:9px;letter-spacing:0.23px">Consommation totale [kWh EP/an]</div>
<div class="a" style="left:1105px;top:591px;width:75px;text-align:center;font-family:'DejaVu Sans Condensed','DejaVu Sans','Liberation Sans',sans-serif;font-size:12.5px;font-weight:bold;line-height:16px;letter-spacing:-0.1px">220</div>
<div class="a" style="left:1105px;top:611px;width:75px;text-align:center;font-family:'DejaVu Sans Condensed','DejaVu Sans','Liberation Sans',sans-serif;font-size:12.5px;font-weight:bold;line-height:16px;letter-spacing:-0.1px">26.086</div>
<div class="a" style="left:712px;top:667.5px;font-size:7.6px;font-weight:bold;line-height:9px;letter-spacing:0.22px">Emissions annuelles de CO2 par m² [kg CO2/(m².an)]</div>
<div class="a" style="left:702px;top:686px;width:394px;height:14px;background:linear-gradient(90deg,#ececec 0.00% 2.50%,#ececec 2.50% 5.00%,#ebebeb 5.00% 7.50%,#e9e9e9 7.50% 10.00%,#e8e8e8 10.00% 12.50%,#e6e6e6 12.50% 15.00%,#e4e4e4 15.00% 17.50%,#e2e2e2 17.50% 20.00%,#e0e0e0 20.00% 22.50%,#dddddd 22.50% 25.00%,#dadada 25.00% 27.50%,#d7d7d7 27.50% 30.00%,#d4d4d4 30.00% 32.50%,#d1d1d1 32.50% 35.00%,#cecece 35.00% 37.50%,#cacaca 37.50% 40.00%,#c7c7c7 40.00% 42.50%,#c3c3c3 42.50% 45.00%,#bfbfbf 45.00% 47.50%,#bbbbbb 47.50% 50.00%,#b6b6b6 50.00% 52.50%,#b2b2b2 52.50% 55.00%,#aeaeae 55.00% 57.50%,#a9a9a9 57.50% 60.00%,#a4a4a4 60.00% 62.50%,#9f9f9f 62.50% 65.00%,#9a9a9a 65.00% 67.50%,#959595 67.50% 70.00%,#909090 70.00% 72.50%,#8b8b8b 72.50% 75.00%,#858585 75.00% 77.50%,#808080 77.50% 80.00%,#7a7a7a 80.00% 82.50%,#757575 82.50% 85.00%,#6f6f6f 85.00% 87.50%,#696969 87.50% 90.00%,#636363 90.00% 92.50%,#5d5d5d 92.50% 95.00%,#565656 95.00% 97.50%,#505050 97.50% 100.00%)"></div>
<div class="a" style="left:712px;top:690.5px;font-size:7.5px;line-height:9px;color:#222;letter-spacing:0.3px">PEU</div>
<div class="a" style="left:1040px;top:690.5px;font-size:7.5px;line-height:9px;color:#fff;letter-spacing:0.1px">BEAUCOUP</div>
<svg class="a" style="left:988px;top:702px" width="16" height="12" viewBox="0 0 16 12"><path d="M1.5 10.5L8 1.5L14.5 10.5z" fill="#ff6600" stroke="#333" stroke-width="1"/></svg>
<div class="a" style="left:1104px;top:679px;width:76px;height:29px;border:1px solid #222;text-align:center;font-size:15px;font-weight:bold;line-height:29px;letter-spacing:0.4px;font-family:'Liberation Serif',serif">46</div>
<div class="a" style="left:694px;top:741.5px;font-size:7.6px;font-weight:bold;line-height:9px;letter-spacing:0.215px">Les 3 premières recommandations pour améliorer la performance énergétique sont:</div>
<div class="a" style="font-size:7.6px;font-weight:bold;line-height:9px;left:716px;letter-spacing:0.19px;top:762.5px">1.Prévoir un thermostat d'ambiance programmable.</div>
<div class="a" style="font-size:7.6px;font-weight:bold;line-height:9px;left:716px;letter-spacing:0.19px;top:771.5px">2.Remplacer le simple vitrage par un double vitrage performant.</div>
<div class="a" style="font-size:7.6px;font-weight:bold;line-height:9px;left:716px;letter-spacing:0.19px;top:780.5px">3.Isolez la boucle de circulation d'eau chaude sanitaire dans les espaces non chauffés au moyen de</div>
<div class="a" style="font-size:7.6px;font-weight:bold;line-height:9px;left:716px;letter-spacing:0.19px;top:789.5px">produits adaptés.</div>
<svg class="a" style="left:1072px;top:221px" width="108" height="138" viewBox="0 0 108 138"><defs><clipPath id="pc"><rect width="108" height="138"/></clipPath><filter id="pb" x="-5%" y="-5%" width="110%" height="110%"><feGaussianBlur stdDeviation="0.55"/></filter></defs><g clip-path="url(#pc)"><g filter="url(#pb)"><rect x="-5" y="-5" width="118" height="148" fill="#f8f8f6"/><rect x="-2" y="5" width="29" height="140" fill="#5e564e"/><rect x="-2" y="5" width="28.0" height="6.5" fill="#cfc8be"/><rect x="-2" y="11.5" width="27.0" height="1.5" fill="#8e857c"/><rect x="-2" y="19" width="26.4" height="4" fill="#cfc8be"/><rect x="-2" y="23" width="25.4" height="1.5" fill="#8e857c"/><rect x="-2" y="29" width="24.8" height="4.5" fill="#cfc8be"/><rect x="-2" y="33.5" width="23.8" height="1.5" fill="#8e857c"/><rect x="-2" y="40" width="23.2" height="4" fill="#cfc8be"/><rect x="-2" y="44" width="22.2" height="1.5" fill="#8e857c"/><rect x="-2" y="53" width="21.6" height="4.5" fill="#cfc8be"/><rect x="-2" y="57.5" width="20.6" height="1.5" fill="#8e857c"/><rect x="-2" y="66" width="20.0" height="4.5" fill="#cfc8be"/><rect x="-2" y="70.5" width="19.0" height="1.5" fill="#8e857c"/><rect x="-2" y="80" width="18.4" height="4.5" fill="#cfc8be"/><rect x="-2" y="84.5" width="17.4" height="1.5" fill="#8e857c"/><rect x="-2" y="94" width="16.8" height="4.5" fill="#cfc8be"/><rect x="-2" y="98.5" width="15.8" height="1.5" fill="#8e857c"/><rect x="-2" y="104" width="12" height="40" fill="#6e665c"/><path d="M31 2L48 2L93 10L98 40L110 62V140H6L14 112L24 40z" fill="#c6c1b9"/><path d="M31 2L36 2L22 112L16 140H6L14 112L24 40z" fill="#b4aea6"/><rect x="33" y="5.8" width="17" height="3.4" fill="#5d6263"/><rect x="35" y="6.8" width="8.5" height="1.4" fill="#9aa2a0"/><rect x="44.9" y="6.8" width="3.4" height="1.4" fill="#7c8484"/><rect x="32" y="14.2" width="18" height="4.1" fill="#5d6263"/><rect x="34" y="15.2" width="9.0" height="2.1" fill="#9aa2a0"/><rect x="44.6" y="15.2" width="3.6" height="2.1" fill="#7c8484"/><rect x="30.5" y="23.7" width="19.0" height="4.3" fill="#5d6263"/><rect x="32.5" y="24.7" width="9.5" height="2.3" fill="#9aa2a0"/><rect x="43.8" y="24.7" width="3.8" height="2.3" fill="#7c8484"/><rect x="28.7" y="34.2" width="20.8" height="5.5" fill="#5d6263"/><rect x="30.7" y="35.2" width="10.4" height="3.5" fill="#9aa2a0"/><rect x="43.3" y="35.2" width="4.2" height="3.5" fill="#7c8484"/><rect x="26" y="46.3" width="23" height="6.7" fill="#5d6263"/><rect x="28" y="47.3" width="11.5" height="4.7" fill="#9aa2a0"/><rect x="42.1" y="47.3" width="4.6" height="4.7" fill="#7c8484"/><rect x="24" y="60.8" width="24.5" height="8.4" fill="#5d6263"/><rect x="26" y="61.8" width="12.2" height="6.4" fill="#9aa2a0"/><rect x="41.1" y="61.8" width="4.9" height="6.4" fill="#7c8484"/><rect x="21" y="77.5" width="27.5" height="8.8" fill="#5d6263"/><rect x="23" y="78.5" width="13.8" height="6.8" fill="#9aa2a0"/><rect x="40.2" y="78.5" width="5.5" height="6.8" fill="#7c8484"/><rect x="17.5" y="96.7" width="30.5" height="10.3" fill="#5d6263"/><rect x="19.5" y="97.7" width="15.2" height="8.3" fill="#9aa2a0"/><rect x="38.8" y="97.7" width="6.1" height="8.3" fill="#7c8484"/><path d="M50 18H70L72 30L75 60L79 112H48z" fill="#45453f"/><rect x="51" y="27" width="21" height="5" fill="#c1bbb2"/><rect x="50.5" y="39" width="23.5" height="5" fill="#c1bbb2"/><rect x="50" y="51.5" width="25.5" height="5.5" fill="#c1bbb2"/><rect x="49.5" y="65.5" width="27.0" height="6.5" fill="#c1bbb2"/><rect x="49" y="78" width="28" height="3" fill="#c1bbb2"/><rect x="48.5" y="85.5" width="30.0" height="5.5" fill="#c1bbb2"/><rect x="48" y="92" width="31" height="3" fill="#c1bbb2"/><rect x="47.5" y="105" width="32.5" height="7" fill="#c1bbb2"/><rect x="61" y="33" width="2" height="75" fill="#aea89f"/><rect x="53" y="35" width="7" height="3" fill="#7a7f7d"/><rect x="65" y="35" width="7" height="3" fill="#7a7f7d"/><rect x="53" y="47" width="7" height="3" fill="#7a7f7d"/><rect x="65" y="47" width="7" height="3" fill="#7a7f7d"/><rect x="53" y="60" width="7" height="3" fill="#7a7f7d"/><rect x="65" y="60" width="7" height="3" fill="#7a7f7d"/><rect x="53" y="74" width="7" height="3" fill="#7a7f7d"/><rect x="65" y="74" width="7" height="3" fill="#7a7f7d"/><rect x="53" y="98" width="7" height="3" fill="#7a7f7d"/><rect x="65" y="98" width="7" height="3" fill="#7a7f7d"/><rect x="74" y="25" width="18" height="5" fill="#596062"/><rect x="77" y="26" width="9.9" height="3.0" fill="#8d9896"/><rect x="75" y="36" width="19.5" height="5.5" fill="#596062"/><rect x="78" y="37" width="10.7" height="3.5" fill="#8d9896"/><rect x="75.5" y="47.5" width="22.5" height="6.5" fill="#596062"/><rect x="78.5" y="48.5" width="12.4" height="4.5" fill="#8d9896"/><rect x="76.5" y="61.5" width="24.0" height="8.5" fill="#596062"/><rect x="79.5" y="62.5" width="13.2" height="6.5" fill="#8d9896"/><rect x="79" y="78.5" width="25" height="9.0" fill="#596062"/><rect x="82" y="79.5" width="13.8" height="7.0" fill="#8d9896"/><rect x="80.5" y="98.5" width="29.5" height="10.0" fill="#596062"/><rect x="83.5" y="99.5" width="16.2" height="8.0" fill="#8d9896"/><path d="M93 -2H112V60L99 40L94 10z" fill="#fafafa"/><path d="M103 52L112 52V80L104 60z" fill="#cbc9c5"/><rect x="14" y="112" width="98" height="30" fill="#bcb8b3"/><rect x="15" y="107" width="97" height="6" fill="#aaa59e"/><rect x="35.5" y="120" width="29" height="22" fill="#403f3c"/><rect x="46" y="124" width="6" height="16" fill="#6e6c66"/><rect x="6" y="119" width="9" height="22" fill="#767a7d"/><rect x="78" y="123" width="5" height="13" fill="#9a9896"/><rect x="43" y="125" width="3" height="5" fill="#fff"/><rect x="43" y="130" width="3" height="4" fill="#c02020"/><rect x="68" y="84" width="1.4" height="56" fill="#222"/><rect x="65.5" y="82" width="6.5" height="9" rx="2" fill="#1e1e1e"/><rect x="59" y="134" width="4.5" height="6" fill="#e6d400"/><rect x="64.5" y="134" width="5" height="6" fill="#1f4fc0"/><path d="M70 140Q72 134 78 134H88Q92 134 94 140z" fill="#fafafa"/><path d="M51 -2H110V10L105 16L101 9L96 14L90 10L86 20L80 14L76 26L70 22L66 28L62 20L58 12L52 8z" fill="#70903f"/><circle cx="69.8" cy="3.6" r="1.9" fill="#93b05a"/><circle cx="97.2" cy="1.5" r="1.8" fill="#e6ecd8"/><circle cx="63.8" cy="2.1" r="1.6" fill="#a4bf6a"/><circle cx="57.0" cy="10.2" r="2.2" fill="#93b05a"/><circle cx="104.1" cy="10.1" r="1.8" fill="#93b05a"/><circle cx="83.7" cy="9.5" r="2.4" fill="#93b05a"/><circle cx="82.6" cy="3.2" r="1.6" fill="#e6ecd8"/><circle cx="58.5" cy="7.4" r="2.1" fill="#a4bf6a"/><circle cx="57.7" cy="13.7" r="1.3" fill="#93b05a"/><circle cx="82.1" cy="1.5" r="1.1" fill="#a4bf6a"/><circle cx="79.3" cy="12.8" r="2.1" fill="#5a7a30"/><circle cx="84.2" cy="10.9" r="1.4" fill="#86a84e"/><circle cx="61.9" cy="18.7" r="1.1" fill="#4a6629"/><circle cx="80.9" cy="21.0" r="2.0" fill="#4a6629"/><circle cx="85.5" cy="1.2" r="1.7" fill="#a4bf6a"/><circle cx="93.6" cy="2.4" r="1.7" fill="#93b05a"/><circle cx="104.9" cy="1.2" r="1.8" fill="#86a84e"/><circle cx="100.2" cy="5.0" r="2.0" fill="#e6ecd8"/><circle cx="79.3" cy="19.1" r="1.1" fill="#93b05a"/><circle cx="104.0" cy="7.6" r="1.9" fill="#93b05a"/><circle cx="92.2" cy="5.0" r="1.8" fill="#f4f6ee"/><circle cx="97.2" cy="4.6" r="1.5" fill="#f4f6ee"/><circle cx="71.1" cy="22.6" r="1.5" fill="#e6ecd8"/><circle cx="58.4" cy="1.4" r="2.1" fill="#a4bf6a"/><circle cx="92.6" cy="6.4" r="2.3" fill="#5a7a30"/><circle cx="56.4" cy="10.8" r="1.8" fill="#a4bf6a"/><circle cx="97.1" cy="13.8" r="1.4" fill="#5a7a30"/><circle cx="106.3" cy="10.9" r="1.5" fill="#a4bf6a"/><circle cx="60.3" cy="4.2" r="1.3" fill="#a4bf6a"/><circle cx="52.7" cy="19.9" r="1.3" fill="#4a6629"/><circle cx="52.2" cy="10.1" r="1.5" fill="#e6ecd8"/><circle cx="69.5" cy="3.0" r="2.2" fill="#e6ecd8"/><circle cx="88.0" cy="11.8" r="1.6" fill="#86a84e"/><circle cx="94.9" cy="14.0" r="2.1" fill="#5a7a30"/></g></g></svg>

</div></div>
</body>
</html>
